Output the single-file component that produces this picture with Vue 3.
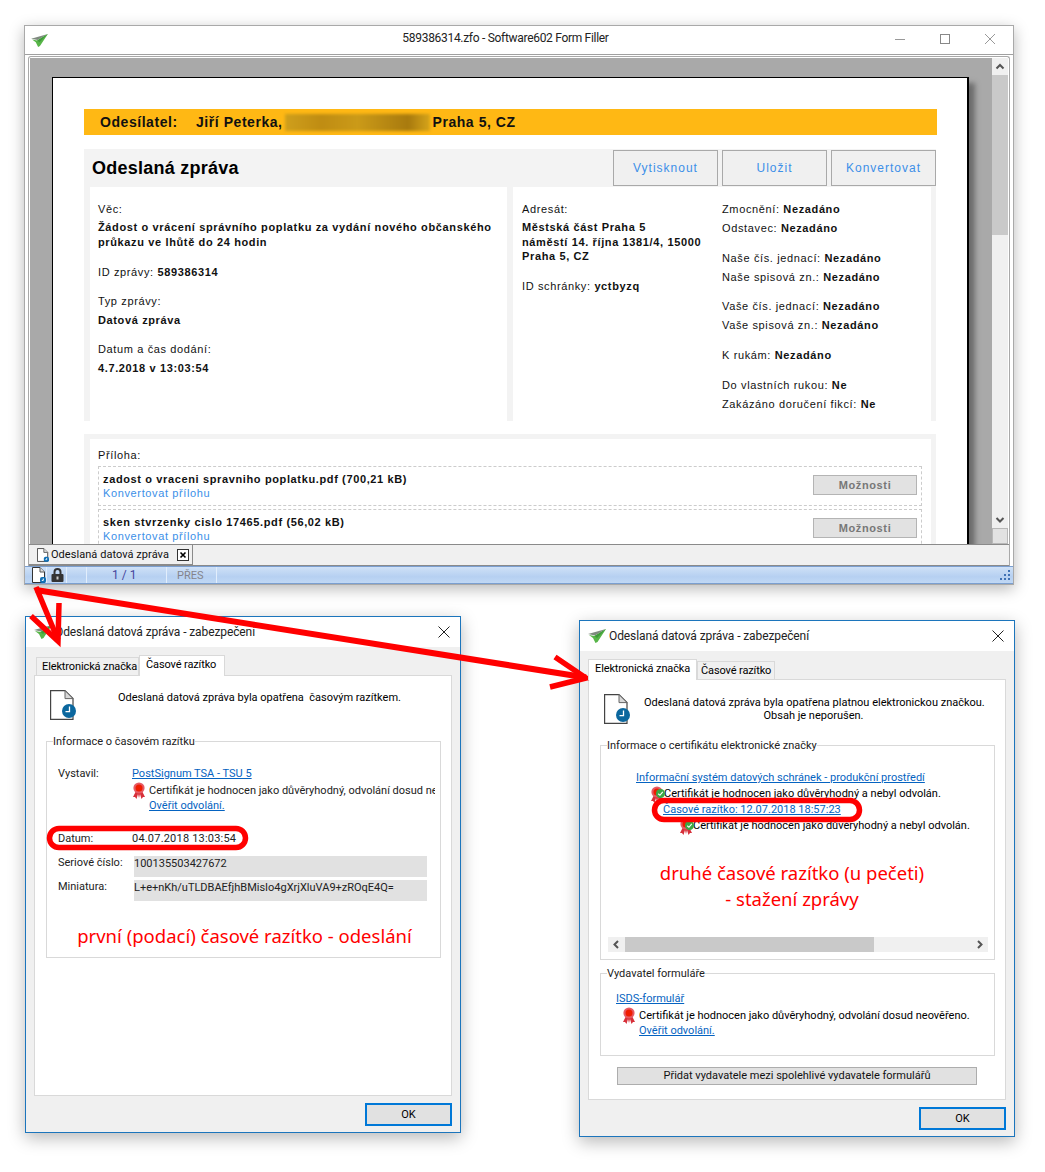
<script setup>
const sideRows = [
  { label: 'Zmocnění:', value: 'Nezadáno', top: 0 },
  { label: 'Odstavec:', value: 'Nezadáno', top: 4 },
  { label: 'Naše čís. jednací:', value: 'Nezadáno', top: 15 },
  { label: 'Naše spisová zn.:', value: 'Nezadáno', top: 4 },
  { label: 'Vaše čís. jednací:', value: 'Nezadáno', top: 14 },
  { label: 'Vaše spisová zn.:', value: 'Nezadáno', top: 4 },
  { label: 'K rukám:', value: 'Nezadáno', top: 15 },
  { label: 'Do vlastních rukou:', value: 'Ne', top: 15 },
  { label: 'Zakázáno doručení fikcí:', value: 'Ne', top: 4 }
]
const attachments = [
  'zadost o vraceni spravniho poplatku.pdf (700,21 kB)',
  'sken stvrzenky cislo 17465.pdf (56,02 kB)'
]
</script>

<template>
  <div class="desktop">
    <svg class="defs" width="0" height="0">
      <defs>
        <symbol id="logo" viewBox="0 0 18 14">
          <path d="M0 5 L18 0 L7 6.5 Z" fill="#7f8a7f"/>
          <path d="M1 6 L6.5 7 L18 0 L9.5 13 L7.5 14 L5 9 Z" fill="#57b548"/>
          <path d="M6.5 7 L18 0 L9 9 Z" fill="#3f9a3a"/>
        </symbol>
        <symbol id="doc" viewBox="0 0 26 30">
          <path d="M.6.6H15L23 8.6V29.4H.6Z" fill="#fff" stroke="#444" stroke-width="1.2"/>
          <path d="M15 .6V8.6H23Z" fill="#d8d8d8" stroke="#666" stroke-width="1"/>
          <circle cx="19" cy="21" r="7" fill="#0b679e"/>
          <path d="M19.5 16.5V21.6H15.5" fill="none" stroke="#fff" stroke-width="1.3"/>
        </symbol>
        <symbol id="doc-small" viewBox="0 0 14 16">
          <path d="M.5.5H8L12.5 5V15.5H.5Z" fill="#fff" stroke="#333"/>
          <path d="M8 .5V5H12.5" fill="#ddd" stroke="#555"/>
          <rect x="8" y="10" width="6" height="6" rx="2" fill="#1170b5"/>
          <path d="M11.3 11.5V13.4H9.8" fill="none" stroke="#fff"/>
        </symbol>
        <symbol id="seal" viewBox="0 0 14 17">
          <path d="M4 9 L1 15 L3 15 L4.5 17 L6 12 L7 16 L8 12 L9.5 17 L11 15 L13 15 L10 9 Z" fill="#d7303a"/>
          <circle cx="7" cy="6" r="5.6" fill="#e65a64"/>
          <circle cx="7" cy="6" r="3.5" fill="#f01c00"/>
        </symbol>
        <symbol id="check" viewBox="0 0 8 8">
          <circle cx="4" cy="4" r="4" fill="#39a845"/>
          <path d="M2 4.2 L3.5 5.6 L6 2.6" fill="none" stroke="#fff" stroke-width="1"/>
        </symbol>
      </defs>
    </svg>

    <!-- Main window -->
    <section class="main-window">
      <header class="main-title">
        <svg class="main-logo"><use href="#logo"/></svg>
        <span class="main-title-text">589386314.zfo - Software602 Form Filler</span>
        <div class="win-controls">
          <svg width="12" height="12" viewBox="0 0 12 12"><path d="M1 6.5H11" stroke="#999" fill="none"/></svg>
          <svg width="12" height="12" viewBox="0 0 12 12"><rect x="1.5" y="1.5" width="9" height="9" stroke="#888" fill="none"/></svg>
          <svg width="12" height="12" viewBox="0 0 12 12"><path d="M1 1L11 11M11 1L1 11" stroke="#999" fill="none"/></svg>
        </div>
      </header>

      <div class="client">
        <div class="frame">
          <div class="frame-row">
            <div class="viewport">
              <div class="sheet">
                <div class="sender">
                  <span class="sender-label">Odesílatel:</span>
                  <span>Jiří Peterka,</span>
                  <span class="blurred"></span>
                  <span>Praha 5, CZ</span>
                </div>

                <div class="message">
                  <div class="message-head">
                    <h1>Odeslaná zpráva</h1>
                    <div class="head-buttons">
                      <span class="doc-button">Vytisknout</span>
                      <span class="doc-button">Uložit</span>
                      <span class="doc-button">Konvertovat</span>
                    </div>
                  </div>
                  <div class="message-grid">
                    <div class="panel panel-left">
                      <p>Věc:</p>
                      <p class="strong m3">Žádost o vrácení správního poplatku za vydání nového občanského<br>průkazu ve lhůtě do 24 hodin</p>
                      <p class="m15">ID zprávy: <b>589386314</b></p>
                      <p class="m14">Typ zprávy:</p>
                      <p class="strong m4">Datová zpráva</p>
                      <p class="m14">Datum a čas dodání:</p>
                      <p class="strong m4">4.7.2018 v 13:03:54</p>
                    </div>
                    <div class="panel panel-right">
                      <div class="addressee">
                        <p>Adresát:</p>
                        <p class="strong m3 address">Městská část Praha 5<br>náměstí 14. října 1381/4, 15000<br>Praha 5, CZ</p>
                        <p class="m15">ID schránky: <b>yctbyzq</b></p>
                      </div>
                      <div class="side">
                        <p v-for="row in sideRows" :key="row.label" :style="{ marginTop: row.top + 'px' }">{{ row.label }} <b>{{ row.value }}</b></p>
                      </div>
                    </div>
                  </div>
                </div>

                <div class="attachments">
                  <div class="attachments-inner">
                    <p class="att-title">Příloha:</p>
                    <div v-for="a in attachments" :key="a" class="att">
                      <div>
                        <p class="strong">{{ a }}</p>
                        <a class="att-link">Konvertovat přílohu</a>
                      </div>
                      <span class="att-button">Možnosti</span>
                    </div>
                  </div>
                </div>
              </div>
            </div>
            <div class="vscroll">
              <svg width="16" height="17" viewBox="0 0 16 17"><path d="M4.5 10.5L8 7L11.5 10.5" fill="none" stroke="#555" stroke-width="2"/></svg>
              <div class="vthumb"></div>
              <div class="vspace"></div>
              <svg width="16" height="16" viewBox="0 0 16 16"><path d="M4.5 6L8 9.5L11.5 6" fill="none" stroke="#555" stroke-width="2"/></svg>
              <div class="vsquare"></div>
            </div>
          </div>
          <div class="tabbar">
            <div class="doc-tab">
              <svg class="tab-doc" width="14" height="16"><use href="#doc-small"/></svg>
              <span>Odeslaná datová zpráva</span>
              <svg class="tab-close" width="12" height="12" viewBox="0 0 12 12"><rect x=".5" y=".5" width="11" height="11" fill="#fff" stroke="#333"/><path d="M3.5 3.5L8.5 8.5M8.5 3.5L3.5 8.5" stroke="#000" stroke-width="1.6"/></svg>
            </div>
          </div>
        </div>
        <footer class="status">
          <div class="st st-icons">
            <svg width="14" height="16"><use href="#doc-small"/></svg>
          </div>
          <div class="st st-lock">
            <svg width="13" height="14" viewBox="0 0 13 14"><path d="M3.5 7V4a3 3 0 0 1 6 0V7" fill="none" stroke="#333" stroke-width="2"/><rect x="0.5" y="6" width="12" height="8" rx="1" fill="#333"/><rect x="5.5" y="8.5" width="2" height="3" fill="#ccc"/></svg>
          </div>
          <div class="st st-empty"></div>
          <div class="st st-page">1 / 1</div>
          <div class="st st-mode">PŘES</div>
          <div class="st-fill"></div>
          <svg class="grip" width="12" height="12" viewBox="0 0 12 12" fill="#3f72b5"><rect x="9" y="1" width="2" height="2"/><rect x="5" y="5" width="2" height="2"/><rect x="9" y="5" width="2" height="2"/><rect x="1" y="9" width="2" height="2"/><rect x="5" y="9" width="2" height="2"/><rect x="9" y="9" width="2" height="2"/></svg>
        </footer>
      </div>
    </section>

    <!-- Left dialog -->
    <section class="dialog dialog-left">
      <header class="dlg-title">
        <svg class="dlg-logo"><use href="#logo"/></svg>
        <span>Odeslaná datová zpráva - zabezpečení</span>
        <svg class="dlg-close" width="12" height="12" viewBox="0 0 12 12"><path d="M.5.5L11.5 11.5M11.5.5L.5 11.5" stroke="#222" fill="none"/></svg>
      </header>
      <div class="dlg-body">
        <div class="tabs tabs-left">
          <span class="tab tab-a">Elektronická značka</span>
          <span class="tab tab-b active">Časové razítko</span>
        </div>
        <div class="tab-panel">
          <div class="dlg-head">
            <svg class="big-doc"><use href="#doc"/></svg>
            <p class="head-left">Odeslaná datová zpráva byla opatřena &nbsp;časovým razítkem.</p>
          </div>
          <div class="group group-ts">
            <span class="legend">Informace o časovém razítku</span>
            <div class="kv issuer">
              <span class="key">Vystavil:</span>
              <div class="val">
                <a class="lnk">PostSignum TSA - TSU 5</a>
                <div class="cert">
                  <svg class="seal"><use href="#seal"/></svg>
                  <div>
                    <p>Certifikát je hodnocen jako důvěryhodný, odvolání dosud neověřeno.</p>
                    <a class="lnk">Ověřit odvolání.</a>
                  </div>
                </div>
              </div>
            </div>
            <div class="kv date-row">
              <span class="key">Datum:</span>
              <span class="digits">04.07.2018 13:03:54</span>
            </div>
            <div class="kv field-row">
              <span class="key">Seriové číslo:</span>
              <span class="field">100135503427672</span>
            </div>
            <div class="kv field-row second">
              <span class="key">Miniatura:</span>
              <span class="field">L+e+nKh/uTLDBAEfjhBMisIo4gXrjXluVA9+zROqE4Q=</span>
            </div>
            <p class="note note-left">první (podací) časové razítko - odeslání</p>
          </div>
        </div>
        <div class="dlg-foot"><span class="ok">OK</span></div>
      </div>
    </section>

    <!-- Right dialog -->
    <section class="dialog dialog-right">
      <header class="dlg-title">
        <svg class="dlg-logo"><use href="#logo"/></svg>
        <span>Odeslaná datová zpráva - zabezpečení</span>
        <svg class="dlg-close" width="12" height="12" viewBox="0 0 12 12"><path d="M.5.5L11.5 11.5M11.5.5L.5 11.5" stroke="#222" fill="none"/></svg>
      </header>
      <div class="dlg-body">
        <div class="tabs">
          <span class="tab tab-c active">Elektronická značka</span>
          <span class="tab tab-d">Časové razítko</span>
        </div>
        <div class="tab-panel">
          <div class="dlg-head">
            <svg class="big-doc"><use href="#doc"/></svg>
            <p class="head-right">Odeslaná datová zpráva byla opatřena platnou elektronickou značkou.<br>Obsah je neporušen.</p>
          </div>
          <div class="group group-cert">
            <span class="legend">Informace o certifikátu elektronické značky</span>
            <a class="lnk tree-1">Informační systém datových schránek - produkční prostředí</a>
            <div class="tree-cert tree-2">
              <span class="seal-wrap"><svg class="seal"><use href="#seal"/></svg><svg class="chk"><use href="#check"/></svg></span>
              <p>Certifikát je hodnocen jako důvěryhodný a nebyl odvolán.</p>
            </div>
            <a class="lnk tree-3">Časové razítko: 12.07.2018 18:57:23</a>
            <div class="tree-cert tree-4">
              <span class="seal-wrap"><svg class="seal"><use href="#seal"/></svg><svg class="chk"><use href="#check"/></svg></span>
              <p>Certifikát je hodnocen jako důvěryhodný a nebyl odvolán.</p>
            </div>
            <p class="note note-right">druhé časové razítko (u pečeti)<br>- stažení zprávy</p>
            <div class="hscroll">
              <svg width="17" height="15" viewBox="0 0 17 15"><path d="M10 4L6.5 7.5L10 11" fill="none" stroke="#555" stroke-width="2"/></svg>
              <div class="hthumb"></div>
              <div class="hspace"></div>
              <svg width="17" height="15" viewBox="0 0 17 15"><path d="M7 4L10.5 7.5L7 11" fill="none" stroke="#555" stroke-width="2"/></svg>
            </div>
          </div>
          <div class="group group-issuer">
            <span class="legend">Vydavatel formuláře</span>
            <a class="lnk">ISDS-formulář</a>
            <div class="cert cert-issuer">
              <svg class="seal"><use href="#seal"/></svg>
              <div>
                <p>Certifikát je hodnocen jako důvěryhodný, odvolání dosud neověřeno.</p>
                <a class="lnk">Ověřit odvolání.</a>
              </div>
            </div>
          </div>
          <div class="add-row"><span class="add-button">Přidat vydavatele mezi spolehlivé vydavatele formulářů</span></div>
        </div>
        <div class="dlg-foot"><span class="ok">OK</span></div>
      </div>
    </section>

    <!-- Red annotations over the windows -->
    <svg class="annot" width="1045" height="1172" viewBox="0 0 1045 1172">
      <g fill="none" stroke="#f00" stroke-width="5.5">
        <path d="M36 587L58 640"/>
        <path d="M31 616L58 641L59 603"/>
        <path d="M36 590L586 677.5" stroke-width="6"/>
        <path d="M555 657L586 678L550 687"/>
        <rect x="49.5" y="828.5" width="196" height="19" rx="9.5"/>
        <rect x="654.5" y="800.5" width="205" height="19" rx="9.5"/>
      </g>
    </svg>
  </div>
</template>

<style>
html, body { margin: 0; background: #fff; }
</style>

<style scoped>
* { box-sizing: border-box; }
p, h1 { margin: 0; }
.desktop {
  position: relative;
  width: 1045px;
  height: 1172px;
  background: #fff;
  overflow: hidden;
  font-family: Roboto, "Noto Sans", sans-serif;
  font-size: 12px;
  color: #000;
}
.defs { position: absolute; }
.annot { position: absolute; left: 0; top: 0; pointer-events: none; }

/* main window */
.main-window {
  position: absolute;
  left: 24px;
  top: 25px;
  width: 990px;
  height: 560px;
  display: flex;
  flex-direction: column;
  background: #fff;
  border: 1px solid #a9a9a9;
  box-shadow: 0 4px 14px rgba(0, 0, 0, .28);
}
.main-title {
  position: relative;
  height: 29px;
  flex: none;
  display: flex;
  align-items: center;
  justify-content: center;
  border-bottom: 1px solid #a0a0a0;
  padding: 0 27px 5px 0;
}
.main-title-text { color: #222; letter-spacing: -.3px; }
.main-logo { position: absolute; left: 6px; top: 8px; width: 17px; height: 13px; }
.win-controls {
  position: absolute;
  right: 17px;
  top: 7px;
  display: flex;
  gap: 33px;
}
.client { flex: 1; display: flex; flex-direction: column; min-height: 0; }
.frame {
  flex: 1;
  min-height: 0;
  margin: 1px 3px 0;
  padding: 1px 1px 0;
  border: 1px solid #a9a9a9;
  border-bottom: 0;
  border-radius: 3px 3px 0 0;
  display: flex;
  flex-direction: column;
}
.frame-row { flex: 1; min-height: 0; display: flex; }
.viewport {
  flex: 1;
  min-width: 0;
  overflow: hidden;
  background: #a9a9a9;
  padding: 19px 0 0 22px;
}
.sheet {
  width: 917px;
  height: 520px;
  background: #fff;
  border: 1px solid #000;
  border-width: 1px 2px 0 1px;
  box-shadow: 6px 6px 5px rgba(60, 60, 60, .55);
  padding: 31px 0 0 31px;
  font-family: "Liberation Sans", Arial, sans-serif;
  font-size: 11px;
  line-height: 15px;
  letter-spacing: .63px;
  color: #111;
}
.sender {
  width: 853px;
  height: 26px;
  background: #ffb814;
  display: flex;
  align-items: center;
  padding-left: 16px;
  font-size: 14px;
  font-weight: 700;
  letter-spacing: .55px;
}
.sender-label { width: 96px; flex: none; }
.blurred {
  width: 145px;
  height: 17px;
  margin: 0 3px 0 2px;
  background: linear-gradient(90deg, #cf9f1c, #bf8c12 25%, #cb9a18 50%, #a87a0e 85%, #d6a41a);
  filter: blur(1.5px);
}
.message {
  width: 852px;
  margin-top: 14px;
  height: 272px;
  background: #f3f3f3;
  padding-top: 1px;
}
.message-head {
  height: 37px;
  display: flex;
  align-items: flex-start;
  justify-content: space-between;
}
.message-head h1 {
  font-size: 18px;
  line-height: 36px;
  letter-spacing: .25px;
  padding-left: 8px;
  color: #000;
}
.head-buttons { display: flex; gap: 4px; }
.doc-button {
  width: 105px;
  height: 36px;
  border: 1px solid #a9a9a9;
  background: #f0f0f0;
  color: #3c8fe8;
  font-size: 12px;
  letter-spacing: 1px;
  display: flex;
  align-items: center;
  justify-content: center;
}
.message-grid {
  display: grid;
  grid-template-columns: 417px 418px;
  gap: 6px;
  padding-left: 6px;
  height: 234px;
}
.panel { background: #fff; padding-top: 15px; }
.panel-left { padding-left: 8px; }
.panel-right { display: flex; padding-left: 9px; }
.addressee { width: 200px; flex: none; }
.address { line-height: 14.5px; }
.strong, b { font-weight: 700; }
.m3 { margin-top: 3px; }
.m4 { margin-top: 4px; }
.m14 { margin-top: 14px; }
.m15 { margin-top: 15px; }
.attachments {
  width: 852px;
  margin-top: 13px;
  height: 120px;
  background: #f3f3f3;
  padding: 5px 0 0 6px;
}
.attachments-inner {
  width: 841px;
  height: 115px;
  background: #fff;
  padding: 9px 0 0 8px;
}
.att-title { margin-bottom: 3px; }
.att {
  width: 824px;
  height: 40px;
  margin-bottom: 3px;
  border: 1px dashed #ccc;
  padding: 5px 4px 0 4px;
  display: flex;
  justify-content: space-between;
  line-height: 14px;
}
.att-link { color: #3c8fe8; display: block; }
.att-button {
  width: 104px;
  height: 20px;
  margin-top: 3px;
  background: #e2e2e2;
  border: 1px solid #b4b4b4;
  color: #777;
  font-weight: 700;
  display: flex;
  align-items: center;
  justify-content: center;
}
.vscroll {
  width: 16px;
  flex: none;
  background: #f0f0f0;
  display: flex;
  flex-direction: column;
}
.vscroll svg { flex: none; }
.vthumb { height: 160px; background: #c9c9c9; }
.vspace { flex: 1; }
.vsquare { height: 16px; background: #e2e2e2; border: 1px solid #b8b8b8; }
.tabbar {
  height: 22px;
  flex: none;
  margin: 0 -1px;
  background: #f0f0f0;
  border-top: 1px solid #8a8a8a;
  border-bottom: 1px solid #8a8a8a;
}
.doc-tab {
  width: 164px;
  height: 21px;
  margin-top: -1px;
  background: #f0f0f0;
  border: 1px solid #8a8a8a;
  border-left: 0;
  display: flex;
  align-items: center;
  padding: 0 3px 0 8px;
  white-space: nowrap;
  color: #111;
  font-size: 11px;
  letter-spacing: .05px;
}
.tab-doc { flex: none; width: 12px; margin-right: 2px; }
.tab-close { flex: none; margin-left: auto; }
.status {
  height: 18px;
  flex: none;
  background: linear-gradient(#cfe1f7, #b6d0f1 60%, #c0d8f5);
  border-top: 1px solid #7b9fd0;
  border-bottom: 1px solid #7b9fd0;
  display: flex;
  align-items: center;
  color: #46469c;
  position: relative;
}
.st {
  height: 100%;
  display: flex;
  align-items: center;
  border-right: 1px solid #e2eefc;
}
.st-icons { width: 22px; padding-left: 7px; }
.st-lock { width: 20px; padding-left: 4px; }
.st-empty { width: 20px; }
.st-page { width: 80px; padding-left: 25px; font-size: 12px; }
.st-mode { width: 50px; padding-left: 10px; color: #84848c; font-size: 11px; }
.st-fill { flex: 1; }
.grip { margin-right: 2px; }

/* dialogs */
.dialog {
  position: absolute;
  width: 436px;
  height: 517px;
  background: #f0f0f0;
  border: 1px solid #1c75bc;
  box-shadow: 0 5px 16px rgba(0, 0, 0, .28);
  display: flex;
  flex-direction: column;
  font-size: 11px;
}
.dialog-left { left: 25px; top: 616px; }
.dialog-right { left: 579px; top: 620px; }
.dlg-title {
  height: 30px;
  flex: none;
  background: #fff;
  display: flex;
  align-items: center;
  padding-left: 29px;
  position: relative;
  color: #222;
  font-size: 12px;
  letter-spacing: -.1px;
}
.dlg-logo { position: absolute; left: 8px; top: 8px; width: 18px; height: 14px; }
.dlg-close { position: absolute; right: 10px; top: 9px; }
.dlg-body { flex: 1; display: flex; flex-direction: column; min-height: 0; padding: 8px 8px 0; }
.tabs { height: 20px; flex: none; display: flex; align-items: flex-end; position: relative; z-index: 1; }
.tabs-left { padding-left: 2px; }
.tab {
  height: 18px;
  line-height: 17px;
  padding: 0 5px;
  border: 1px solid #d9d9d9;
  border-bottom: 0;
  background: #f0f0f0;
  white-space: nowrap;
  flex: none;
  letter-spacing: -.12px;
}
.tab.active {
  height: 21px;
  margin-bottom: -1px;
  background: #fff;
  line-height: 18px;
}
.tab-a { width: 103px; }
.tab-b { width: 86px; padding-left: 6px; }
.tab-c { width: 109px; padding-left: 6px; }
.tab-d { width: 78px; padding-left: 3px; }
.tab-panel {
  height: 421px;
  flex: none;
  background: #fff;
  border: 1px solid #d9d9d9;
  padding: 0 10px 0 11px;
}
.dlg-head { height: 65px; display: flex; padding: 14px 0 0 4px; }
.big-doc { width: 26px; height: 30px; flex: none; }
.head-left { margin-left: 42px; line-height: 16px; white-space: nowrap; }
.head-right {
  margin: 2px 0 0 14px;
  width: 339px;
  flex: none;
  line-height: 13px;
  text-align: center;
  white-space: nowrap;
}
.group { position: relative; border: 1px solid #d9d9d9; }
.legend {
  position: absolute;
  left: 6px;
  top: -8px;
  background: #fff;
  line-height: 16px;
  white-space: nowrap;
  color: #222;
}
.group-ts { height: 217px; padding: 24px 5px 0 11px; line-height: 16px; }
.kv { display: grid; grid-template-columns: 74px 1fr; white-space: nowrap; color: #222; }
.val { min-width: 0; overflow: hidden; }
.lnk { color: #0563c1; text-decoration: underline; line-height: 16px; display: block; width: max-content; }
.cert { display: flex; gap: 3px; line-height: 15px; white-space: nowrap; }
.cert p { line-height: 15px; padding-top: 1px; }
.seal { width: 14px; height: 17px; flex: none; }
.digits { letter-spacing: .2px; }
.date-row { margin-top: 17px; }
.field-row { margin-top: 9px; }
.field-row.second { margin-top: 3px; }
.field {
  display: block;
  margin: 0 8px 0 2px;
  height: 21px;
  background: #e1e1e1;
  line-height: 14px;
  padding-top: 1px;
}
.field-row .key { margin-top: -1px; }
.note { color: #f00; font-family: "Noto Sans", sans-serif; font-size: 18.5px; text-align: center; line-height: 26px; white-space: nowrap; }
.note-left { margin: 22px 0 0 -4px; }
.group-cert { height: 215px; padding: 24px 7px 0 7px; line-height: 16px; white-space: nowrap; }
.tree-1 { margin-left: 28px; }
.tree-cert { display: flex; align-items: flex-start; }
.tree-2 { margin-left: 42px; }
.tree-3 { margin-left: 55px; }
.tree-4 { margin-left: 71px; }
.seal-wrap { position: relative; width: 14px; height: 16px; flex: none; }
.seal-wrap .seal { position: absolute; left: 0; top: 0; }
.chk { position: absolute; left: 6px; top: 3px; width: 9px; height: 9px; }
.note-right { margin: 26px 11px 0 0; }
.hscroll { display: flex; height: 15px; width: 380px; background: #f0f0f0; margin-top: 25px; }
.hscroll svg { flex: none; }
.hthumb { width: 249px; background: #c9c9c9; }
.hspace { flex: 1; }
.group-issuer { height: 83px; margin-top: 13px; padding: 17px 5px 0 15px; }
.cert-issuer { margin-left: 6px; }
.add-row { margin-top: 11px; padding-left: 17px; }
.add-button {
  display: block;
  width: 360px;
  height: 18px;
  line-height: 16px;
  text-align: center;
  background: #e1e1e1;
  border: 1px solid #adadad;
  color: #111;
}
.dlg-foot { display: flex; justify-content: flex-end; padding-top: 7px; }
.ok {
  width: 87px;
  height: 23px;
  background: #e1e1e1;
  border: 2px solid #0078d7;
  display: flex;
  align-items: center;
  justify-content: center;
}
</style>
